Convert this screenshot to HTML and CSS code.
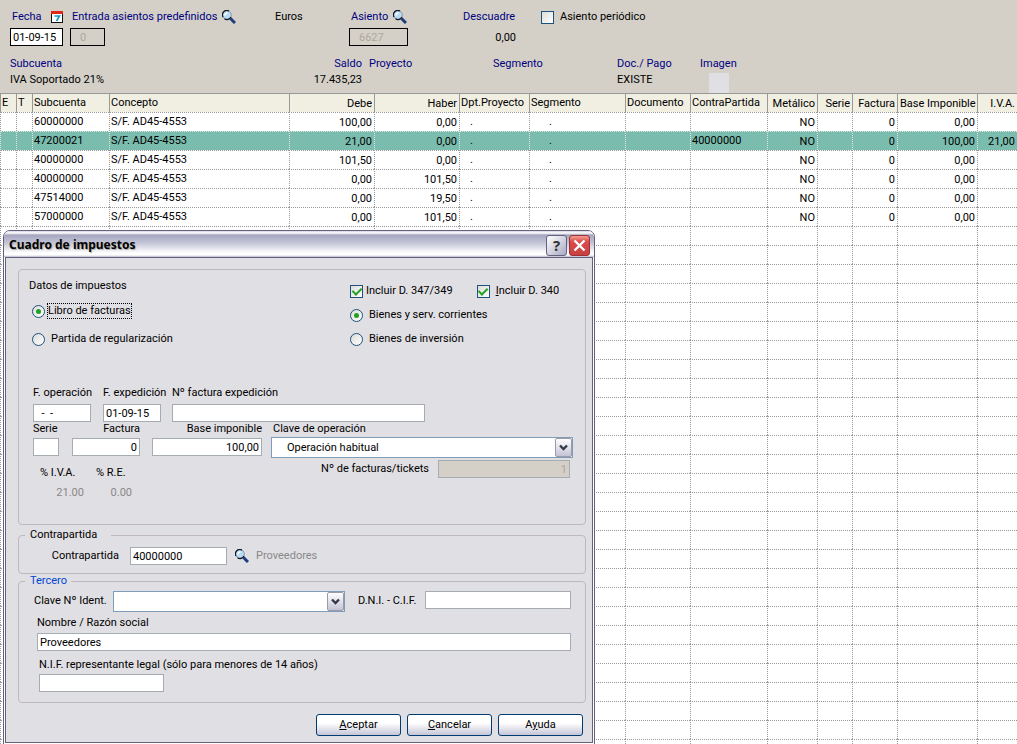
FILE: index.html
```html
<!DOCTYPE html>
<html lang="es">
<head>
    <meta charset="utf-8">
    <title>Asientos - Cuadro de impuestos</title>
    <link rel="stylesheet" href="styles.css">
</head>
<body>
    <svg class="sprites" aria-hidden="true">
        <symbol id="lens" viewBox="0 0 14 14">
            <path d="M8.5 8.5L13 13" stroke="#1d3f7c" stroke-width="3"/>
            <circle cx="5" cy="5" r="4.3" fill="#b9dcf5" stroke="#8a94a8"/>
            <path d="M1 7A4.4 4.4 0 0 1 7 1M2.5 8.8A4.4 4.4 0 0 0 9 7" fill="none" stroke="#101828" stroke-width="1.2"/>
            <path d="M3 5.5A2.3 2.3 0 0 1 5.5 3" fill="none" stroke="#fff" stroke-width="1.6"/>
        </symbol>
        <symbol id="arrow" viewBox="0 0 9 7">
            <path d="M1 1.5L4.5 5L8 1.5" fill="none" stroke="#333a44" stroke-width="2.4"/>
        </symbol>
    </svg>

    <header class="panel">
        <div class="entry">
            <div class="field">
                <div class="caption"><label for="fecha">Fecha</label>
                    <svg class="calendar" viewBox="0 0 12 12"><path d="M0 0H12V12H0Z" fill="#111"/><path d="M1 3H11V11H1Z" fill="#fff"/><path d="M0 0H12V3H0Z" fill="#e02818"/><path d="M3.5 5H8.5L5.5 10" fill="none" stroke="#109ac0" stroke-width="1.6"/></svg>
                </div>
                <input class="boxed date" id="fecha" type="text" value="01-09-15">
            </div>
            <div class="field">
                <div class="caption"><label for="predef">Entrada asientos predefinidos</label><svg class="lens"><use href="#lens"/></svg></div>
                <input class="boxed code" id="predef" type="text" value="0" disabled>
            </div>
            <div class="field"><div class="caption plain">Euros</div></div>
            <div class="field">
                <div class="caption"><label for="asiento">Asiento</label><svg class="lens"><use href="#lens"/></svg></div>
                <input class="boxed number" id="asiento" type="text" value="6627" disabled>
            </div>
            <div class="field balance">
                <div class="caption">Descuadre</div>
                <output>0,00</output>
            </div>
            <label class="check periodic"><input type="checkbox"> Asiento periódico</label>
        </div>
        <dl class="account">
            <div><dt>Subcuenta</dt><dd>IVA Soportado 21%</dd></div>
            <div class="right"><dt>Saldo</dt><dd>17.435,23</dd></div>
            <div><dt>Proyecto</dt><dd></dd></div>
            <div><dt>Segmento</dt><dd></dd></div>
            <div><dt>Doc./ Pago</dt><dd>EXISTE</dd></div>
            <div><dt>Imagen</dt><dd class="picture"></dd></div>
        </dl>
    </header>

    <table class="lines">
        <colgroup>
            <col class="w16"><col class="w16"><col class="w77"><col><col class="w85"><col class="w85"><col class="w70"><col class="w96"><col class="w65"><col class="w77"><col class="w50"><col class="w35"><col class="w45"><col class="w80"><col class="w40">
        </colgroup>
        <thead>
            <tr><th>E</th><th>T</th><th>Subcuenta</th><th>Concepto</th><th class="num">Debe</th><th class="num">Haber</th><th>Dpt.Proyecto</th><th>Segmento</th><th>Documento</th><th>ContraPartida</th><th class="num">Metálico</th><th class="num">Serie</th><th class="num">Factura</th><th class="num">Base Imponible</th><th class="num">I.V.A.</th></tr>
        </thead>
        <tbody id="lines">
            <tr><td></td><td></td><td>60000000</td><td>S/F. AD45-4553</td><td class="num">100,00</td><td class="num">0,00</td><td class="dot">.</td><td class="dot wide">.</td><td></td><td></td><td class="num">NO</td><td></td><td class="num">0</td><td class="num">0,00</td><td></td></tr>
            <tr class="selected"><td></td><td></td><td>47200021</td><td>S/F. AD45-4553</td><td class="num">21,00</td><td class="num">0,00</td><td class="dot">.</td><td class="dot wide">.</td><td></td><td>40000000</td><td class="num">NO</td><td></td><td class="num">0</td><td class="num">100,00</td><td class="num">21,00</td></tr>
            <tr><td></td><td></td><td>40000000</td><td>S/F. AD45-4553</td><td class="num">101,50</td><td class="num">0,00</td><td class="dot">.</td><td class="dot wide">.</td><td></td><td></td><td class="num">NO</td><td></td><td class="num">0</td><td class="num">0,00</td><td></td></tr>
            <tr><td></td><td></td><td>40000000</td><td>S/F. AD45-4553</td><td class="num">0,00</td><td class="num">101,50</td><td class="dot">.</td><td class="dot wide">.</td><td></td><td></td><td class="num">NO</td><td></td><td class="num">0</td><td class="num">0,00</td><td></td></tr>
            <tr><td></td><td></td><td>47514000</td><td>S/F. AD45-4553</td><td class="num">0,00</td><td class="num">19,50</td><td class="dot">.</td><td class="dot wide">.</td><td></td><td></td><td class="num">NO</td><td></td><td class="num">0</td><td class="num">0,00</td><td></td></tr>
            <tr><td></td><td></td><td>57000000</td><td>S/F. AD45-4553</td><td class="num">0,00</td><td class="num">101,50</td><td class="dot">.</td><td class="dot wide">.</td><td></td><td></td><td class="num">NO</td><td></td><td class="num">0</td><td class="num">0,00</td><td></td></tr>
        </tbody>
    </table>

    <form class="dialog" role="dialog" aria-labelledby="title">
        <div class="titlebar">
            <h1 id="title">Cuadro de impuestos</h1>
            <button type="button" class="tool">?</button>
            <button type="button" class="tool close" aria-label="Cerrar"><svg viewBox="0 0 13 13"><path d="M1.5 1.5L11.5 11.5M11.5 1.5L1.5 11.5" stroke="#fff" stroke-width="2.4"/></svg></button>
        </div>
        <div class="content">
            <section class="group taxes">
                <div class="options">
                    <div class="book">
                        <p>Datos de impuestos</p>
                        <label class="check focused"><input type="radio" name="book" checked><span>Libro de facturas</span></label>
                        <label class="check spaced"><input type="radio" name="book"><span>Partida de regularización</span></label>
                    </div>
                    <div class="kind">
                        <div class="pair">
                            <label class="check"><input type="checkbox" checked><span>Incluir D. 347/349</span></label>
                            <label class="check spaced"><input type="checkbox" checked><span><u>I</u>ncluir D. 340</span></label>
                        </div>
                        <label class="check spaced"><input type="radio" name="kind" checked><span>Bienes y serv. corrientes</span></label>
                        <label class="check spaced"><input type="radio" name="kind"><span>Bienes de inversión</span></label>
                    </div>
                </div>

                <div class="fields invoice">
                    <div class="item"><label for="fop">F. operación</label><input id="fop" class="short" type="text" value="  -  -"></div>
                    <div class="item"><label for="fexp">F. expedición</label><input id="fexp" class="short" type="text" value="01-09-15"></div>
                    <div class="item"><label for="nfac">Nº factura expedición</label><input id="nfac" type="text"></div>
                </div>
                <div class="fields amounts">
                    <div class="item serie"><label for="serie">Serie</label><input id="serie" type="text"></div>
                    <div class="item factura"><label for="factura">Factura</label><input id="factura" type="text" value="0"></div>
                    <div class="item base"><label for="base">Base imponible</label><input id="base" type="text" value="100,00"></div>
                    <div class="item clave"><label for="clave">Clave de operación</label>
                        <div class="combo"><select id="clave"><option>Operación habitual</option></select><span><svg viewBox="0 0 9 7"><use href="#arrow"/></svg></span></div>
                    </div>
                </div>
                <div class="totals">
                    <dl class="rates">
                        <div><dt>% I.V.A.</dt><dd>21.00</dd></div>
                        <div><dt>% R.E.</dt><dd>0.00</dd></div>
                    </dl>
                    <label for="tickets">Nº de facturas/tickets</label>
                    <input id="tickets" type="text" value="1" disabled>
                </div>
            </section>

            <fieldset class="group counterpart">
                <legend>Contrapartida</legend>
                <label for="contra">Contrapartida</label>
                <input id="contra" type="text" value="40000000">
                <svg class="lens"><use href="#lens"/></svg>
                <output for="contra">Proveedores</output>
            </fieldset>

            <fieldset class="group third">
                <legend>Tercero</legend>
                <div class="ident">
                    <label for="ident">Clave Nº Ident.</label>
                    <div class="combo"><select id="ident"><option></option></select><span><svg viewBox="0 0 9 7"><use href="#arrow"/></svg></span></div>
                    <label for="dni">D.N.I. - C.I.F.</label>
                    <input id="dni" type="text">
                </div>
                <div class="item name"><label for="nombre">Nombre / Razón social</label><input id="nombre" type="text" value="Proveedores"></div>
                <div class="item legal"><label for="nif">N.I.F. representante legal (sólo para menores de 14 años)</label><input id="nif" type="text"></div>
            </fieldset>

            <div class="buttons">
                <button type="submit"><u>A</u>ceptar</button>
                <button type="button"><u>C</u>ancelar</button>
                <button type="button">A<u>y</u>uda</button>
            </div>
        </div>
    </form>

    <script>
        // fill the rest of the grid with empty lines
        var lines = document.getElementById("lines");
        var rowHeight = 19;
        var empty = Math.ceil((window.innerHeight - lines.getBoundingClientRect().bottom) / rowHeight);

        for (var i = 0; i < empty; i++) {
            var row = lines.insertRow();
            for (var j = 0; j < 15; j++) {
                row.insertCell();
            }
        }
    </script>
</body>
</html>
```
FILE: styles.css
```css
* {
    box-sizing: border-box;
}

body {
    margin: 0;
    height: 100vh;
    overflow: hidden;
    background-color: #fff;
    color: #000;
    font: 11px/14px Roboto, sans-serif;
}

input, select, button {
    font: inherit;
    color: inherit;
}

p, dl, dd {
    margin: 0;
}

.sprites {
    display: none;
}

.lens {
    width: 14px;
    height: 14px;
    flex: none;
}

/* entry header */
.panel {
    height: 93px;
    padding: 9px 10px 0;
    background-color: #d4d0c8;
}

.entry {
    display: grid;
    grid-template-columns: 60px 205px 74px 114px 78px 1fr;
    height: 48px;
}

.caption {
    display: flex;
    align-items: center;
    height: 16px;
    margin-bottom: 3px;
    padding-left: 2px;
    color: #000080;
    white-space: nowrap;
}

.caption .lens {
    margin-left: 5px;
}

.plain {
    padding-left: 0;
    color: #000;
}

.calendar {
    width: 12px;
    height: 12px;
    margin-left: 9px;
}

.boxed {
    display: block;
    height: 18px;
    padding: 0 2px;
    border: 1px solid #000;
    border-radius: 0;
    background-color: #fff;
}

.boxed:disabled {
    padding: 0 9px;
    background-color: transparent;
    color: #aca899;
}

.date {
    width: 53px;
}

.code {
    width: 35px;
}

.number {
    width: 59px;
}

.balance {
    width: 53px;
    text-align: right;
}

.balance .caption {
    padding-left: 0;
}

.balance output {
    display: block;
    padding-top: 3px;
}

.account {
    display: grid;
    grid-template-columns: 200px 159px 124px 124px 83px 1fr;
}

.account dt {
    height: 16px;
    color: #000080;
}

.account dd {
    height: 16px;
}

.account .right {
    padding-right: 7px;
    text-align: right;
}

.account .picture {
    width: 20px;
    height: 20px;
    margin-left: 9px;
    background-color: #e0dfe3;
}

/* check boxes and radios */
.check {
    display: flex;
    align-items: center;
    height: 16px;
}

.check input {
    flex: none;
    display: grid;
    place-content: center;
    width: 13px;
    height: 13px;
    margin: 0 3px 0 0;
    appearance: none;
    border: 1px solid #1c5180;
    background: linear-gradient(135deg, #dcdcd7, #fff);
}

.check input[type="radio"] {
    border-radius: 50%;
}

.check input[type="radio"]:checked::before {
    content: "";
    width: 5px;
    height: 5px;
    border-radius: 50%;
    background-color: #21a121;
}

.check input[type="checkbox"]:checked::before {
    content: "";
    width: 4px;
    height: 7px;
    margin-bottom: 2px;
    border: solid #21a121;
    border-width: 0 2px 2px 0;
    transform: rotate(45deg);
}

.check.spaced input {
    margin-right: 6px;
}

.focused span {
    outline: 1px dotted #000;
}

.periodic input {
    margin-right: 6px;
}

/* entry lines */
.lines {
    width: 100%;
    table-layout: fixed;
    border-collapse: separate;
    border-spacing: 0;
}

.w16 { width: 16px; }
.w35 { width: 35px; }
.w40 { width: 40px; }
.w45 { width: 45px; }
.w50 { width: 50px; }
.w65 { width: 65px; }
.w70 { width: 70px; }
.w77 { width: 77px; }
.w80 { width: 80px; }
.w85 { width: 85px; }
.w96 { width: 96px; }

.lines th, .lines td {
    height: 19px;
    padding: 2px 1px 0;
    border: dotted #999;
    border-width: 1px 0 0 1px;
    font-weight: normal;
    text-align: left;
    vertical-align: top;
    white-space: nowrap;
}

.lines th {
    border-style: solid;
    background-color: #f1efe2;
}

.lines .num {
    padding: 3px 2px 0;
    text-align: right;
}

.lines .dot {
    padding-left: 10px;
}

.lines .wide {
    padding-left: 19px;
}

.selected td {
    border-color: #e4e4e4;
    background-color: #7abdae;
}

/* dialog window */
.dialog {
    position: absolute;
    top: 230px;
    left: 3px;
    width: 592px;
    padding: 0 1px 1px;
    border: 1px solid #62627f;
    border-radius: 7px 7px 0 0;
    background-color: #fff;
}

.titlebar {
    display: flex;
    align-items: center;
    gap: 2px;
    height: 26px;
    margin: 0 -1px;
    padding: 2px 4px 0 5px;
    border-radius: 6px 6px 0 0;
    background: linear-gradient(#d5d5e2, #fff 2px, #a5a5c0 4px, #c5c5d8 12px, #fff 22px, #fff 24px, #b8b8cc);
}

.titlebar h1 {
    flex: 1;
    margin: 0;
    font: bold 12px/18px "Noto Sans", sans-serif;
    text-shadow: 1px 1px 1px #aaa;
}

.tool {
    display: grid;
    place-content: center;
    width: 21px;
    height: 21px;
    padding: 0;
    border: 1px solid #62627f;
    border-radius: 3px;
    background: linear-gradient(135deg, #fff, #a9a9c4);
    font: bold 15px/18px "Noto Sans", sans-serif;
    color: #333;
}

.close {
    border-color: #a03038;
    background: linear-gradient(#f0a090, #dd4a4a 30%, #c84040);
}

.close svg {
    width: 13px;
    height: 13px;
}

.content {
    padding: 11px 6px 6px 12px;
    border: 1px solid #62627f;
    background-color: #e0dfe3;
}

.content input[type="text"] {
    height: 18px;
    min-width: 0;
    padding: 0 2px;
    border: 1px solid #a5acb2;
    border-radius: 0;
    background-color: #fff;
}

.content input[type="text"]:disabled {
    background-color: #d4d0c8;
    color: #aca899;
    text-align: right;
}

.content label {
    white-space: nowrap;
}

.group {
    min-width: 0;
    margin: 0;
    border: 1px solid #bfb8bf;
    border-radius: 4px;
}

.taxes {
    margin-bottom: 3px;
}

.options {
    display: flex;
    padding-top: 9px;
}

.book {
    flex: none;
    width: 331px;
    padding-left: 13px;
}

.book p {
    margin: 0 0 10px -3px;
}

.book .check + .check {
    margin-top: 12px;
}

.kind {
    display: grid;
    gap: 8px;
    padding-top: 4px;
}

.pair {
    display: flex;
    gap: 24px;
}

.fields {
    display: grid;
    padding-left: 14px;
}

.invoice {
    grid-template-columns: 70px 69px 253px;
    margin-top: 39px;
}

.amounts {
    grid-template-columns: 39px 80px 119px 302px;
}

.item {
    display: flex;
    flex-direction: column;
    gap: 2px;
}

.invoice .item {
    gap: 4px;
}

.item .short {
    width: 58px;
}

.serie {
    width: 26px;
}

.factura {
    width: 68px;
}

.base {
    width: 110px;
}

.factura, .base, .factura input, .base input {
    text-align: right;
}

.clave {
    gap: 1px;
}

.clave label {
    padding-left: 2px;
}

/* drop-down with its arrow button laid in the same cell */
.combo {
    display: grid;
    height: 21px;
}

.combo select, .combo span {
    grid-area: 1 / 1;
}

.combo select {
    width: 100%;
    appearance: none;
    padding: 0 20px 0 15px;
    border: 1px solid #7f9db9;
    border-radius: 0;
    background-color: #fff;
}

.combo span {
    display: grid;
    place-content: center;
    justify-self: end;
    width: 17px;
    margin: 1px;
    border: 1px solid #9a9aa8;
    border-radius: 2px;
    background: linear-gradient(#fff, #c3c3d6);
    pointer-events: none;
}

.combo svg {
    width: 9px;
    height: 7px;
}

.totals {
    display: flex;
    height: 66px;
    padding: 2px 15px 0 21px;
}

.rates {
    display: flex;
    flex: 1;
    gap: 12px;
    padding-top: 6px;
}

.rates div {
    width: 44px;
}

.rates dd {
    padding-top: 6px;
    color: #888;
    text-align: right;
}

.rates div + div {
    width: 36px;
}

.rates dt {
    white-space: nowrap;
}

.totals label {
    padding: 2px 9px 0 0;
}

.totals input {
    width: 132px;
}

legend {
    margin-left: 6px;
    padding: 0 14px 0 5px;
}

.counterpart {
    display: flex;
    align-items: center;
    padding: 5px 0 8px;
}

.counterpart label {
    width: 111px;
    padding-right: 11px;
    text-align: right;
}

.counterpart input {
    width: 97px;
    margin-right: 8px;
}

.counterpart output {
    padding-left: 7px;
    color: #888;
}

.third {
    padding: 3px 14px 10px 15px;
}

.third legend {
    margin-left: -9px;
    padding-right: 4px;
    color: #0046d5;
}

.ident {
    display: grid;
    grid-template-columns: 79px 232px 80px 1fr;
}

.ident label {
    padding-top: 3px;
}

.ident .combo + label {
    padding-left: 13px;
}

.name {
    gap: 3px;
    margin: 4px 0 7px 3px;
}

.legal {
    width: 130px;
    padding-left: 5px;
}

.buttons {
    display: flex;
    justify-content: flex-end;
    gap: 6px;
    margin-top: 11px;
    padding-right: 3px;
}

.buttons button {
    width: 85px;
    height: 22px;
    padding: 0;
    border: 1px solid #003c74;
    border-radius: 3px;
    background: linear-gradient(#fff 40%, #c6c5d7);
}
```
